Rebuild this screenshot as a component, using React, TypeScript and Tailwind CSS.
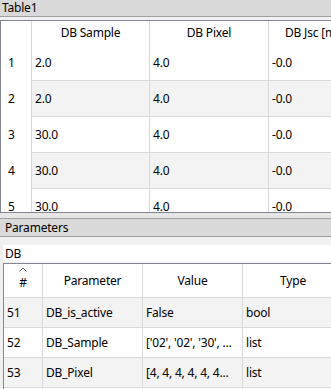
const topRows = [
  ["1", "2.0", "4.0", "-0.0"],
  ["2", "2.0", "4.0", "-0.0"],
  ["3", "30.0", "4.0", "-0.0"],
  ["4", "30.0", "4.0", "-0.0"],
  ["5", "30.0", "4.0", "-0.0"],
];

const params = [
  ["51", "DB_is_active", "False", "bool"],
  ["52", "DB_Sample", "['02', '02', '30', ...", "list"],
  ["53", "DB_Pixel", "[4, 4, 4, 4, 4, 4...", "list"],
];

export default function App() {
  return (
    <div className="w-[331px] h-[389px] overflow-hidden bg-[#f0f0f0] font-['Noto_Sans',sans-serif] text-[12px] tracking-[-0.2px] text-black flex flex-col leading-none">
      <div className="h-[17px] shrink-0 bg-[#d9d9d9] border-b border-[#a0a0a0] pl-[2px] flex items-center">
        Table1
      </div>
      <div className="h-[3px] shrink-0" />
      <div className="h-[193px] shrink-0 border border-r-0 border-[#828790] bg-white overflow-hidden flex flex-col">
        <div className="h-[24px] shrink-0 flex">
          <div className="w-[31px] shrink-0 border-r border-[#d9d9d9]" />
          <div className="w-[118px] shrink-0 border-r border-[#d9d9d9] flex items-center justify-center">DB Sample</div>
          <div className="w-[119px] shrink-0 border-r border-[#d9d9d9] flex items-center justify-center">DB Pixel</div>
          <div className="w-[119px] shrink-0 flex items-center justify-center whitespace-nowrap">DB Jsc [mA/cm²]</div>
        </div>
        {topRows.map((r, i) => (
          <div key={i} className="h-[36px] shrink-0 flex">
            <div className="w-[31px] shrink-0 border-r border-[#d9d9d9] bg-white pl-[7px] flex items-center">{r[0]}</div>
            <div className={`flex-1 flex border-b border-[#d9d9d9] ${i % 2 === 1 ? "bg-[#f3f3f3]" : "bg-white"}`}>
              <div className="w-[118px] shrink-0 border-r border-[#d9d9d9] pl-[3px] flex items-center">{r[1]}</div>
              <div className="w-[119px] shrink-0 border-r border-[#d9d9d9] pl-[3px] flex items-center">{r[2]}</div>
              <div className="w-[119px] shrink-0 pl-[3px] flex items-center">{r[3]}</div>
            </div>
          </div>
        ))}
      </div>
      <div className="h-[5px] shrink-0 bg-[#e6e6e6]" />
      <div className="h-[19px] shrink-0 bg-[#d9d9d9] border-y border-[#a0a0a0] pl-[5px] flex items-center">
        Parameters
      </div>
      <div className="h-[8px] shrink-0" />
      <div className="h-[17px] shrink-0 ml-[3px] bg-white pl-[2px] flex items-center">DB</div>
      <div className="h-[1px] shrink-0" />
      <div className="flex-1 ml-[3px] border-l border-t border-[#828790] bg-white overflow-hidden flex flex-col">
        <div className="h-[34px] shrink-0 flex border-b border-[#d9d9d9]">
          <div className="w-[39px] shrink-0 border-r border-[#d9d9d9] flex flex-col items-center pt-[3px]">
            <svg width="8" height="5" viewBox="0 0 8 5" className="block">
              <polyline points="0.5,4.5 4,1 7.5,4.5" fill="none" stroke="#606060" strokeWidth="1" />
            </svg>
            <span className="mt-[5px]">#</span>
          </div>
          <div className="w-[100px] shrink-0 border-r border-[#d9d9d9] flex items-center justify-center">Parameter</div>
          <div className="w-[100px] shrink-0 border-r border-[#d9d9d9] flex items-center justify-center">Value</div>
          <div className="w-[100px] shrink-0 flex items-center justify-center">Type</div>
        </div>
        {params.map((r, i) => (
          <div key={i} className={`h-[30px] shrink-0 flex border-b border-[#d9d9d9] ${i % 2 === 0 ? "bg-[#f3f3f3]" : "bg-white"}`}>
            <div className="w-[39px] shrink-0 border-r border-[#d9d9d9] pl-[3px] flex items-center">{r[0]}</div>
            <div className="w-[100px] shrink-0 border-r border-[#d9d9d9] pl-[3px] flex items-center whitespace-nowrap">{r[1]}</div>
            <div className="w-[100px] shrink-0 border-r border-[#d9d9d9] pl-[3px] flex items-center whitespace-nowrap overflow-hidden">{r[2]}</div>
            <div className="w-[100px] shrink-0 pl-[3px] flex items-center">{r[3]}</div>
          </div>
        ))}
      </div>
    </div>
  );
}
